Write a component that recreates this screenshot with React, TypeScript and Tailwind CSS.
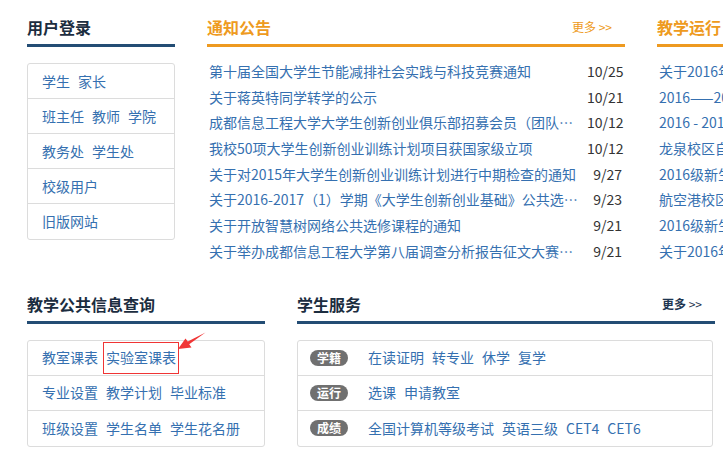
import React from 'react';

const loginRows = [
  ['学生', '家长'],
  ['班主任', '教师', '学院'],
  ['教务处', '学生处'],
  ['校级用户'],
  ['旧版网站'],
];

const notices = [
  { title: '第十届全国大学生节能减排社会实践与科技竞赛通知', date: '10/25' },
  { title: '关于蒋英特同学转学的公示', date: '10/21' },
  { title: '成都信息工程大学大学生创新创业俱乐部招募会员（团队）招新公告', date: '10/12' },
  { title: '我校50项大学生创新创业训练计划项目获国家级立项', date: '10/12' },
  { title: '关于对2015年大学生创新创业训练计划进行中期检查的通知', date: '9/27' },
  { title: '关于2016-2017（1）学期《大学生创新创业基础》公共选修课的通知', date: '9/23' },
  { title: '关于开放智慧树网络公共选修课程的通知', date: '9/21' },
  { title: '关于举办成都信息工程大学第八届调查分析报告征文大赛的通知', date: '9/21' },
];

const teaching = [
  '关于2016年秋季学期补考安排的通知',
  '2016——2017学年第一学期选课通知',
  '2016 - 2017学年第一学期校历',
  '龙泉校区自习教室开放通知',
  '2016级新生入学教育安排',
  '航空港校区教室调整通知',
  '2016级新生英语分级考试通知',
  '关于2016年度教学质量检查的通知',
];

const queryRows = [
  ['教室课表', '实验室课表'],
  ['专业设置', '教学计划', '毕业标准'],
  ['班级设置', '学生名单', '学生花名册'],
];

const services = [
  { tag: '学籍', links: ['在读证明', '转专业', '休学', '复学'] },
  { tag: '运行', links: ['选课', '申请教室'] },
  { tag: '成绩', links: ['全国计算机等级考试', '英语三级', 'CET4', 'CET6'] },
];

const Header = ({ title, orange, more, moreDark }: { title: string; orange?: boolean; more?: boolean; moreDark?: boolean }) => (
  <div>
    <div className="flex items-end justify-between h-[22px]">
      <span className={`text-[16px] leading-[22px] font-bold ${orange ? 'text-[#ee9a20]' : 'text-[#1c2d40]'}`}>{title}</span>
      {more && (
        <span className={`text-[12px] leading-[18px] mr-[13px] mb-[2px] ${moreDark ? 'text-[#1e3550] font-bold' : 'text-[#ee9a20]'}`}>
          更多 <span className="font-normal">&gt;&gt;</span>
        </span>
      )}
    </div>
    <div className={`mt-[6px] h-[3px] ${orange ? 'bg-[#ee9a20]' : 'bg-[#234d74]'}`}></div>
  </div>
);

export default function App() {
  return (
    <div className="relative w-[723px] h-[456px] overflow-hidden bg-white font-['Noto_Sans_CJK_SC','Noto_Sans',sans-serif] text-[14px]">
      <div className="pl-[27px] pt-[16px]">
        {/* top row */}
        <div className="flex gap-[32px]">
          <div className="w-[148px] shrink-0">
            <Header title="用户登录" />
            <div className="mt-[16px] border border-[#dcdcdc] rounded-[3px]">
              {loginRows.map((row, i) => (
                <div key={i} className={`h-[35px] flex items-center gap-[8px] pl-[14px] text-[#3570b0] ${i < loginRows.length - 1 ? 'border-b border-[#dcdcdc]' : ''}`}>
                  {row.map((w) => (
                    <span key={w}>{w}</span>
                  ))}
                </div>
              ))}
            </div>
          </div>

          <div className="w-[418px] shrink-0">
            <Header title="通知公告" orange more />
            <div className="mt-[11px]">
              {notices.map((n) => (
                <div key={n.title + n.date} className="h-[25.7px] flex items-center pl-[2px]">
                  <span className="w-[374px] shrink-0 truncate text-[#3570b0] leading-[20px]">{n.title}</span>
                  <span className="ml-[4px] w-[35px] shrink-0 text-right text-[#333] leading-[20px]">{n.date}</span>
                </div>
              ))}
            </div>
          </div>

          <div className="w-[200px] shrink-0">
            <Header title="教学运行" orange />
            <div className="mt-[11px]">
              {teaching.map((t) => (
                <div key={t} className="h-[25.7px] flex items-center pl-[2px]">
                  <span className="whitespace-nowrap text-[#3570b0] leading-[20px]">{t}</span>
                </div>
              ))}
            </div>
          </div>
        </div>

        {/* bottom row */}
        <div className="flex gap-[32px] mt-[29px]">
          <div className="w-[238px] shrink-0">
            <Header title="教学公共信息查询" />
            <div className="mt-[16px] border border-[#dcdcdc] rounded-[3px]">
              {queryRows.map((row, i) => (
                <div key={i} className={`h-[35px] flex items-center gap-[8px] pl-[14px] text-[#3570b0] ${i < queryRows.length - 1 ? 'border-b border-[#dcdcdc]' : ''}`}>
                  {row.map((w) => (
                    <span key={w} className="relative">
                      {w}
                      {w === '实验室课表' && (
                        <span className="absolute left-[-3px] right-[-3px] top-[-5px] bottom-[-6px] border border-[#f03535]"></span>
                      )}
                    </span>
                  ))}
                </div>
              ))}
            </div>
          </div>

          <div className="w-[418px] shrink-0">
            <Header title="学生服务" more moreDark />
            <div className="mt-[16px] mr-[2px] border border-[#dcdcdc] rounded-[3px]">
              {services.map((s, i) => (
                <div key={s.tag} className={`h-[35px] flex items-center pl-[12px] ${i < services.length - 1 ? 'border-b border-[#dcdcdc]' : ''}`}>
                  <span className="w-[38px] h-[16px] rounded-full bg-[#707070] text-white text-[12px] leading-[16px] font-bold text-center">{s.tag}</span>
                  <div className="ml-[20px] flex gap-[8px] text-[#3570b0]">
                    {s.links.map((l) => (
                      <span key={l}>{l}</span>
                    ))}
                  </div>
                </div>
              ))}
            </div>
          </div>
        </div>
      </div>

      {/* annotation arrow */}
      <svg className="absolute left-[170px] top-[325px]" width="40" height="30" viewBox="0 0 40 30">
        <polygon points="8,24 15.5,13.5 17.8,16.4 35.5,7.4 19.2,19.2 21.5,22.5" fill="#f03535" />
      </svg>
    </div>
  );
}
